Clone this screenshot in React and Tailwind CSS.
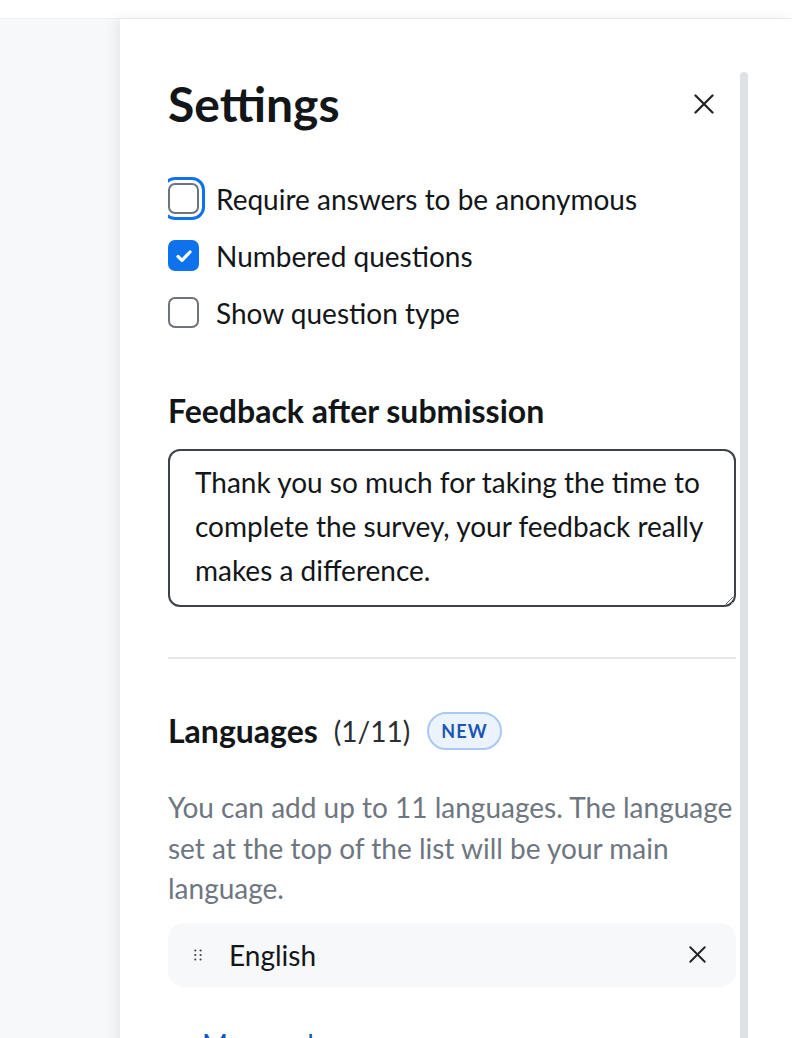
import { useState } from "react";

function CheckRow({ checked, focused, label, onToggle }) {
  return (
    <label className="flex items-center h-[57px] cursor-pointer overflow-hidden">
      <span
        className={
          "relative flex items-center justify-center w-[31px] h-[31px] shrink-0 rounded-[7px] " +
          (checked ? "bg-[#0e72ed]" : "border-2 border-[#6e737b] bg-white") +
          (focused ? " outline-[3px] outline-solid outline-[#0e72ed] outline-offset-[3px]" : "")
        }
        onClick={onToggle}
      >
        {checked && (
          <svg width="22" height="22" viewBox="0 0 22 22" fill="none">
            <path d="M5 11.5l4 3.8L17 7" stroke="white" strokeWidth="3.2" strokeLinecap="round" strokeLinejoin="round" />
          </svg>
        )}
      </span>
      <span className="ml-[17px] text-[28px] text-[#131619]">{label}</span>
    </label>
  );
}

function XIcon({ size = 20 }) {
  return (
    <svg width={size} height={size} viewBox="0 0 20 20" fill="none">
      <path d="M1.5 1.5l17 17M18.5 1.5l-17 17" stroke="#222" strokeWidth="2.2" strokeLinecap="round" />
    </svg>
  );
}

export default function App() {
  const [anon, setAnon] = useState(false);
  const [numbered, setNumbered] = useState(true);
  const [showType, setShowType] = useState(false);
  const [feedback, setFeedback] = useState(
    "Thank you so much for taking the time to complete the survey, your feedback really makes a difference."
  );

  return (
    <div className="h-[1038px] overflow-hidden bg-white font-['Lato','Liberation_Sans',sans-serif]">
      <div className="h-[19px] bg-white border-b border-[#eef0f2]"></div>
      <div className="flex h-full bg-[#f7f8fa]">
        <div className="w-[120px] shrink-0"></div>
        <div className="relative flex-1 bg-white shadow-[-4px_0_12px_rgba(0,0,0,0.07)]">
          <div className="absolute right-[44px] top-[53px] bottom-0 w-[8px] rounded-t-full bg-[#dee2e7]"></div>

          <div className="pl-[48px] pr-[56px] pt-[57px]">
            <div className="flex items-center justify-between h-[56px]">
              <h1 className="text-[48px] font-bold text-[#131619] leading-none">Settings</h1>
              <button className="mr-[22px]">
                <XIcon />
              </button>
            </div>

            <div className="mt-[38px]">
              <CheckRow checked={anon} focused label="Require answers to be anonymous" onToggle={() => setAnon(!anon)} />
              <CheckRow checked={numbered} label="Numbered questions" onToggle={() => setNumbered(!numbered)} />
              <CheckRow checked={showType} label="Show question type" onToggle={() => setShowType(!showType)} />
            </div>

            <h2 className="mt-[52px] h-[36px] flex items-center text-[32px] font-bold text-[#131619]">
              Feedback after submission
            </h2>
            <textarea
              value={feedback}
              onChange={e => setFeedback(e.target.value)}
              className="mt-[20px] block w-full h-[158px] rounded-[12px] border-2 border-[#3d4148] px-[25px] pt-[9px] text-[28px] leading-[44px] text-[#131619] outline-none"
            />

            <div className="mt-[50px] h-[2px] bg-[#e4e6e9]"></div>

            <div className="mt-[52px] h-[40px] flex items-center">
              <span className="text-[32px] font-bold text-[#131619]">Languages</span>
              <span className="ml-[16px] text-[28px] text-[#2a2d31]">(1/11)</span>
              <span className="ml-[17px] h-[38px] px-[12px] flex items-center rounded-full border-2 border-[#a9c9f2] bg-[#eaf3fe] text-[18px] font-bold tracking-[1.2px] text-[#1c56b3]">
                NEW
              </span>
            </div>

            <p className="mt-[36px] text-[28px] leading-[40.5px] text-[#6e7681]">
              You can add up to 11 languages. The language set at the top of the list will be your main language.
            </p>

            <div className="mt-[14px] h-[64px] flex items-center rounded-[16px] bg-[#f7f8fa] pl-[26px] pr-[30px]">
              <svg width="8" height="12" viewBox="0 0 8 12" fill="#444">
                <circle cx="1.3" cy="1.5" r="1.1" />
                <circle cx="6.6" cy="1.5" r="1.1" />
                <circle cx="1.3" cy="6" r="1.1" />
                <circle cx="6.6" cy="6" r="1.1" />
                <circle cx="1.3" cy="10.5" r="1.1" />
                <circle cx="6.6" cy="10.5" r="1.1" />
              </svg>
              <span className="ml-[27px] flex-1 text-[28px] text-[#131619]">English</span>
              <XIcon size={17} />
            </div>

            <div className="mt-[36px] pl-[34px] text-[28px] text-[#0e5ac8]">Manage languages</div>
          </div>
        </div>
      </div>
    </div>
  );
}
